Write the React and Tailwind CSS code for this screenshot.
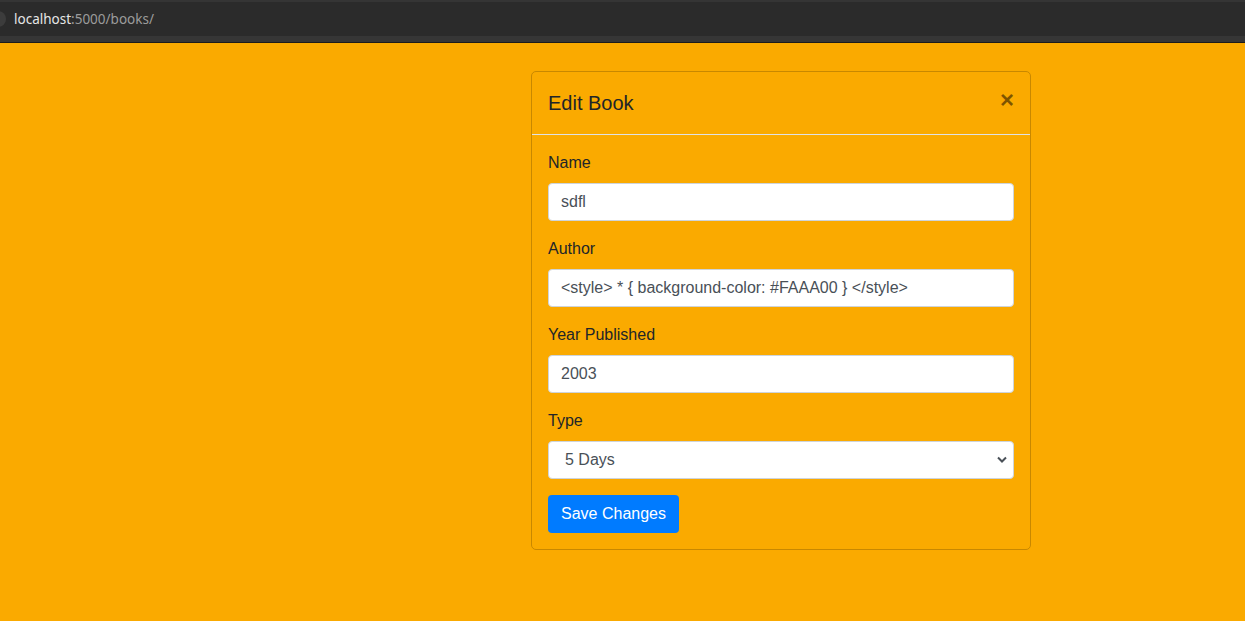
import React, { useState } from 'react';

const fieldClass =
    'block w-full h-[38px] px-3 py-[6px] text-base leading-6 text-[#495057] bg-white border border-[#ced4da] rounded-[4px] outline-none';

const Field = ({ label, children }) => (
    <div className="mb-4">
        <label className="block mb-2 text-base leading-6 text-[#212529]">{label}</label>
        {children}
    </div>
);

const App = () => {
    const [form, setForm] = useState({
        name: 'sdfl',
        author: '<style> * { background-color: #FAAA00 } </style>',
        year: '2003',
        type: '5 Days',
    });

    const update = (key) => (e) => setForm({ ...form, [key]: e.target.value });

    return (
        <div className="min-h-[621px] bg-[#FAAA00] font-['Liberation_Sans',Arial,sans-serif]">
            {/* Browser address bar */}
            <div className="h-[43px] bg-[#2b2b2b] border-t-2 border-[#353535] flex flex-col">
                <div className="flex-1 flex items-center relative">
                    <div className="absolute -left-[10px] top-[9px] w-[16px] h-[16px] rounded-full bg-[#3c3c3c]" />
                    <span className="ml-[14px] text-[13.5px] font-['Noto_Sans',sans-serif] text-[#e6e6e6]">
                        localhost<span className="text-[#9c9c9c]">:5000/books/</span>
                    </span>
                </div>
                <div className="h-[6px] bg-[#363636]" />
                <div className="h-[1px] bg-[#1c1c1c]" />
            </div>

            {/* Modal */}
            <div className="ml-[531px] mt-[28px] w-[500px] border border-[#c88800] rounded-[5px] bg-[#FAAA00]">
                <div className="flex items-start justify-between p-4 border-b border-[#dee2e6]">
                    <h5 className="text-[20px] leading-[30px] text-[#212529]">Edit Book</h5>
                    <button className="-m-4 p-4 text-[24px] leading-[24px] font-bold text-black/50">×</button>
                </div>
                <div className="p-4">
                    <Field label="Name">
                        <input className={fieldClass} value={form.name} onChange={update('name')} />
                    </Field>
                    <Field label="Author">
                        <input className={fieldClass} value={form.author} onChange={update('author')} />
                    </Field>
                    <Field label="Year Published">
                        <input className={fieldClass} value={form.year} onChange={update('year')} />
                    </Field>
                    <Field label="Type">
                        <div className="relative">
                            <select
                                className={`${fieldClass} appearance-none pl-4`}
                                value={form.type}
                                onChange={update('type')}
                            >
                                <option>5 Days</option>
                                <option>10 Days</option>
                                <option>2 Weeks</option>
                            </select>
                            <svg
                                className="absolute right-[7px] top-[15px] pointer-events-none"
                                width="10"
                                height="7"
                                viewBox="0 0 10 7"
                            >
                                <path d="M1 1.5 L5 5.5 L9 1.5" stroke="#495057" strokeWidth="2" fill="none" />
                            </svg>
                        </div>
                    </Field>
                    <button className="w-[131px] h-[38px] px-3 text-base leading-6 text-white bg-[#007bff] rounded-[4px]">
                        Save Changes
                    </button>
                </div>
            </div>
        </div>
    );
};

export default App;
